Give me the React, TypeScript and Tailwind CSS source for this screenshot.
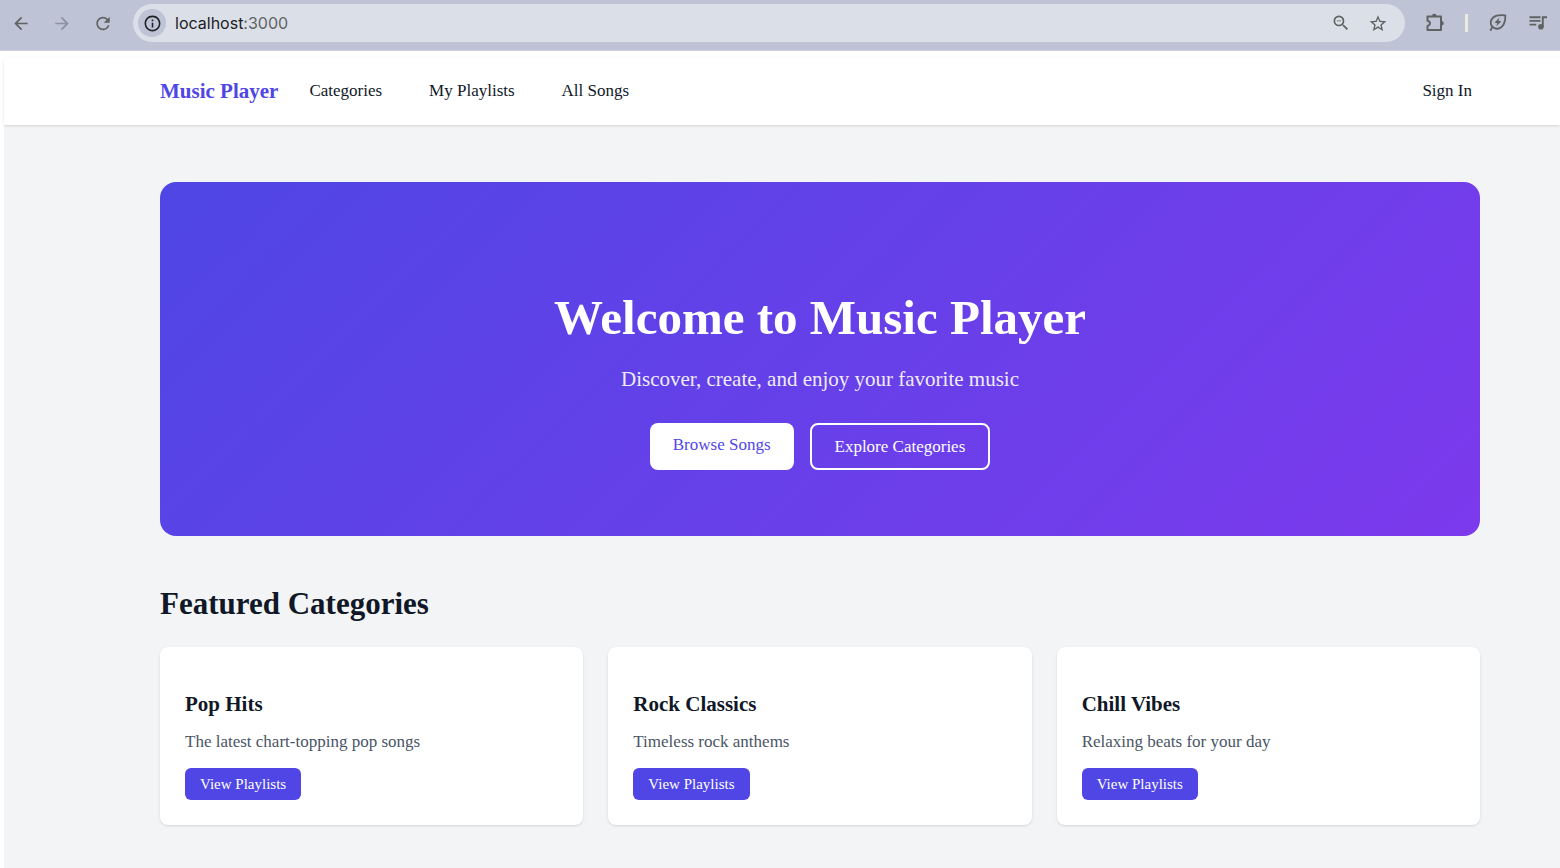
import type { ReactNode } from "react";
import { MdArrowBack, MdArrowForward, MdInfoOutline, MdRefresh, MdStarBorder, MdZoomOut } from "react-icons/md";

interface Category {
  id: number;
  name: string;
  description: string;
}

const categories: Category[] = [
  { id: 1, name: "Pop Hits", description: "The latest chart-topping pop songs" },
  { id: 2, name: "Rock Classics", description: "Timeless rock anthems" },
  { id: 3, name: "Chill Vibes", description: "Relaxing beats for your day" },
];

const navLinks = ["Categories", "My Playlists", "All Songs"];

function IconButton({ label, children, className = "text-[#5f6363]" }: { label: string; children: ReactNode; className?: string }) {
  return (
    <button type="button" aria-label={label} className={`flex h-5 w-5 shrink-0 items-center justify-center ${className}`}>
      {children}
    </button>
  );
}

function ExtensionIcon() {
  return (
    <svg viewBox="0 0 20 20" className="h-5 w-5 shrink-0" fill="none" stroke="currentColor" strokeWidth="2" strokeLinejoin="round">
      <path d="M2.500 3.500H16v13.500H2.500v-4.100c1.500-.3 2.400-1.300 2.400-2.600S4 8 2.500 7.700Z" />
      <path d="M7 3a2.300 2.300 0 0 1 4.600 0ZM16.500 8a2.300 2.300 0 0 1 0 4.600Z" fill="currentColor" stroke="none" />
    </svg>
  );
}

function EnergySaverIcon() {
  return (
    <svg viewBox="0 0 20 20" className="h-5 w-5 shrink-0" fill="none" stroke="currentColor" strokeWidth="1.8" strokeLinejoin="round">
      <path d="M17.300 2.300c-5-.6-9.300-.2-11.900 1.900C2.300 6.800 1.800 11 4.200 13.700c2.700 3 7.300 2.600 10-.3 2.500-2.700 3.300-6.500 3.100-11.100Z" />
      <path d="M4.600 13.600 2.300 17.800" />
      <path d="M11.500 4.500 6.600 9.400l2.700.9-1 3 5-4.800-2.800-.8Z" fill="currentColor" stroke="none" />
    </svg>
  );
}

function MediaIcon() {
  return (
    <svg viewBox="0 0 20 20" className="h-5 w-5 shrink-0" fill="none" stroke="currentColor" strokeWidth="1.9">
      <path d="M1.500 4.200h11M1.500 7.900h11M1.500 11.600h6.800M14.800 14V4.200h4.200" />
      <circle cx="12.900" cy="13.700" r="2.800" fill="currentColor" stroke="none" />
    </svg>
  );
}

function BrowserBar() {
  return (
    <div className="flex h-[51px] items-start border-b border-[#cfd2dc] bg-[#bec3d5] pt-1 pr-3 pl-[11px]">
      <div className="flex h-[38px] items-center gap-[21px]">
        <IconButton label="Back">
          <MdArrowBack size={21} />
        </IconButton>
        <IconButton label="Forward" className="text-[#8e929f]">
          <MdArrowForward size={21} />
        </IconButton>
        <IconButton label="Reload">
          <MdRefresh size={21} />
        </IconButton>
      </div>
      <div className="ml-5 flex h-[38px] min-w-0 flex-1 items-center rounded-full bg-[#dbdfe8] pr-[17px] pl-[5px]">
        <button type="button" aria-label="View site information" className="flex h-7 w-7 shrink-0 items-center justify-center rounded-full bg-[#bec3d5] text-[#1f2023]">
          <MdInfoOutline size={19} />
        </button>
        <div className="ml-[9px] min-w-0 flex-1 font-['Inter','Liberation_Sans',sans-serif] text-[16px] leading-5 text-[#202124]">
          localhost<span className="text-[#5f6363]">:3000</span>
        </div>
        <div className="flex items-center gap-[17px]">
          <IconButton label="Zoom">
            <MdZoomOut size={22} />
          </IconButton>
          <IconButton label="Bookmark this tab">
            <MdStarBorder size={21} />
          </IconButton>
        </div>
      </div>
      <div className="ml-5 flex h-[38px] items-center gap-5 text-[#5f6363]">
        <IconButton label="Extensions">
          <ExtensionIcon />
        </IconButton>
        <span className="h-[18px] w-[3px] bg-[#ebebe2]" />
        <IconButton label="Energy saver">
          <EnergySaverIcon />
        </IconButton>
        <IconButton label="Media controls">
          <MediaIcon />
        </IconButton>
      </div>
    </div>
  );
}

function Navbar() {
  return (
    <header className="bg-white pr-20 pl-[156px] shadow">
      <nav className="flex h-[67px] items-center pb-0.5">
        <a href="#" className="text-[21px] leading-8 font-bold text-[#4f46e5]">
          Music Player
        </a>
        <div className="ml-[23px] flex gap-[31px]">
          {navLinks.map((link) => (
            <a key={link} href="#" className="px-2 text-[17px] leading-6 text-gray-900">
              {link}
            </a>
          ))}
        </div>
        <a href="#" className="ml-auto px-2 text-[17px] leading-6 text-gray-900">
          Sign In
        </a>
      </nav>
    </header>
  );
}

function Hero() {
  return (
    <section className="rounded-2xl bg-[linear-gradient(135deg,#4f46e5,#7c3aed)] px-8 pt-[99px] pb-[66px] text-center text-white">
      <h1 className="text-[49px] leading-[74px] font-bold">Welcome to Music Player</h1>
      <p className="mt-2 text-[21px] leading-8 opacity-90">Discover, create, and enjoy your favorite music</p>
      <div className="mt-7 flex justify-center gap-4 text-[17px] leading-[19px]">
        <a href="#" className="rounded-lg bg-white px-[23px] py-3 text-[#4f46e5]">
          Browse Songs
        </a>
        <a href="#" className="rounded-lg border-2 border-white px-[23px] py-3">
          Explore Categories
        </a>
      </div>
    </section>
  );
}

function CategoryCard({ category }: { category: Category }) {
  return (
    <article className="rounded-lg bg-white px-[25px] pt-[41px] pb-[25px] shadow">
      <h3 className="text-[21px] leading-8 font-bold text-gray-900">{category.name}</h3>
      <p className="mt-2 text-[17px] leading-7 text-gray-600">{category.description}</p>
      <a href="#" className="mt-3 inline-block rounded-md bg-[#4f46e5] px-[15px] py-1 text-[15px] leading-6 text-white">
        View Playlists
      </a>
    </article>
  );
}

export default function App() {
  return (
    <div className="min-h-screen bg-white font-['Liberation_Serif',serif]">
      <BrowserBar />
      <div className="ml-1 min-h-[calc(100vh-51px)] bg-gray-100">
        <div className="h-[7px] bg-white" />
        <Navbar />
        <main className="pt-[57px] pr-20 pb-10 pl-[156px]">
          <Hero />
          <h2 className="mt-11 text-[31px] leading-[48px] font-bold text-gray-900">Featured Categories</h2>
          <div className="mt-[19px] grid grid-cols-3 gap-[25px]">
            {categories.map((category) => (
              <CategoryCard key={category.id} category={category} />
            ))}
          </div>
        </main>
      </div>
    </div>
  );
}
